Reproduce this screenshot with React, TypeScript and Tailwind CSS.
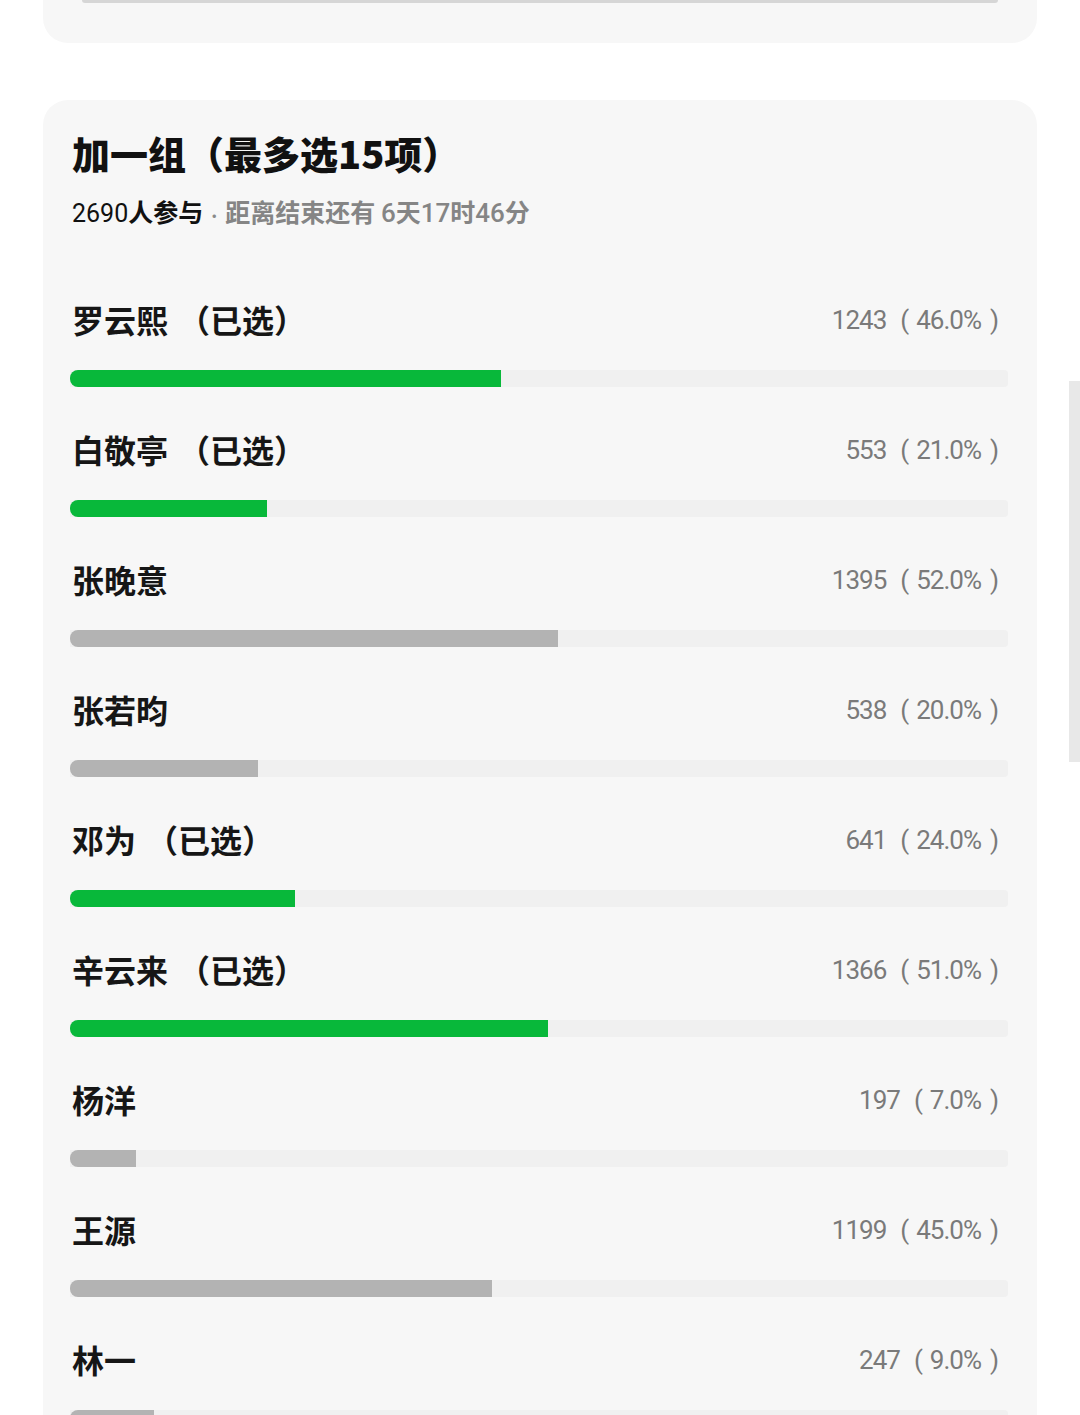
import React from 'react';

interface PollOption {
  name: string;
  picked: boolean;
  votes: number;
  pct: number;
}

const options: PollOption[] = [
  { name: '罗云熙', picked: true, votes: 1243, pct: 46 },
  { name: '白敬亭', picked: true, votes: 553, pct: 21 },
  { name: '张晚意', picked: false, votes: 1395, pct: 52 },
  { name: '张若昀', picked: false, votes: 538, pct: 20 },
  { name: '邓为', picked: true, votes: 641, pct: 24 },
  { name: '辛云来', picked: true, votes: 1366, pct: 51 },
  { name: '杨洋', picked: false, votes: 197, pct: 7 },
  { name: '王源', picked: false, votes: 1199, pct: 45 },
  { name: '林一', picked: false, votes: 247, pct: 9 },
];

const cjk = "font-['Noto_Sans_CJK_SC','Noto_Sans',sans-serif]";
const num = "font-['Roboto','Noto_Sans_CJK_SC',sans-serif]";

function OptionRow({ option }: { option: PollOption }) {
  return (
    <div className="pb-[40px]">
      <div className="flex items-center justify-between h-[44px]">
        <span className="text-[32px] font-bold text-[#161616] leading-[44px]">
          {option.name}
          {option.picked && <span className="ml-[10px]">（已选）</span>}
        </span>
        <span className={`flex items-center pr-[10px] pt-[2px] text-[26px] tracking-[-1px] text-[#7a7a7a] leading-[44px] ${num}`}>
          <span>{option.votes}</span>
          <span className="ml-[14px]">(</span>
          <span className="ml-[8px]">{option.pct.toFixed(1)}%</span>
          <span className="ml-[9px]">)</span>
        </span>
      </div>
      <div className="mt-[29px] h-[17px] bg-[#f0f0f0] rounded-r-[4px] -ml-[2px]">
        <div
          className={`h-full rounded-l-[8px] ${option.picked ? 'bg-[#08b83a]' : 'bg-[#b3b3b3]'}`}
          style={{ width: `${option.pct}%` }}
        />
      </div>
    </div>
  );
}

export default function App() {
  return (
    <div className={`relative min-h-screen bg-white ${cjk}`}>
      {/* previous card, cut off at the top */}
      <div className="mx-[43px] h-[43px] bg-[#f7f7f7] rounded-b-[25px]">
        <div className="mx-[39px] h-[3px] bg-[#d6d6d6] rounded-b-full" />
      </div>

      {/* poll card */}
      <div className="mx-[43px] mt-[57px] bg-[#f7f7f7] rounded-[25px] pt-[29px] pl-[29px] pr-[29px]">
        <h2 className="text-[38px] font-black leading-[48px] text-[#111]">加一组（最多选15项）</h2>
        <p className="mt-[17px] text-[25px] leading-[34px]">
          <span className={`text-[#111] ${num}`}>2690</span>
          <span className="text-[#111] font-bold">人参与</span>
          <span className="text-[#8a8a8a] text-[16px] mx-[3px]">·</span>
          <span className="text-[#858585] font-bold">距离结束还有 </span>
          <span className={`text-[26px] text-[#858585] font-medium ${num}`}>6</span>
          <span className="text-[#858585] font-bold">天</span>
          <span className={`text-[26px] text-[#858585] font-medium ${num}`}>17</span>
          <span className="text-[#858585] font-bold">时</span>
          <span className={`text-[26px] text-[#858585] font-medium ${num}`}>46</span>
          <span className="text-[#858585] font-bold">分</span>
        </p>
        <div className="mt-[65px]">
          {options.map((o) => (
            <OptionRow key={o.name} option={o} />
          ))}
        </div>
      </div>

      {/* scrollbar thumb */}
      <div className="absolute right-0 top-[381px] w-[11px] h-[381px] bg-[#e8e8e8]" />
    </div>
  );
}
